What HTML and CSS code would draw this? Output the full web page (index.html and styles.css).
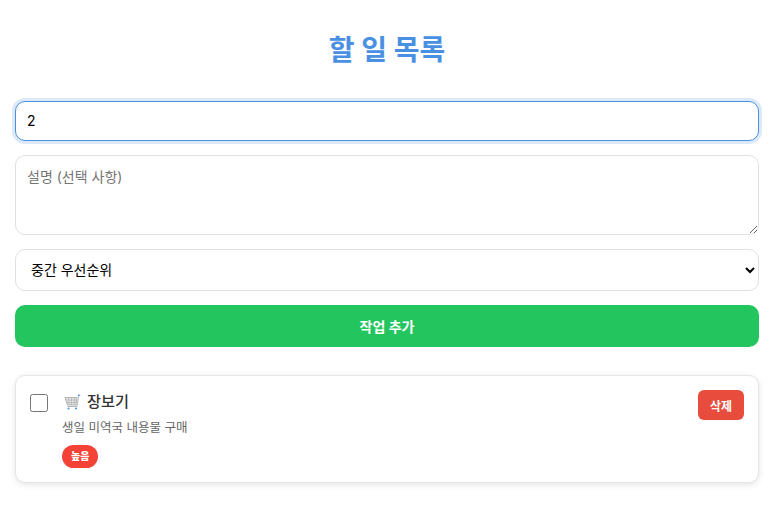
FILE: index.html
```
<!DOCTYPE html>
<html lang="ko">
<head>
<meta charset="utf-8">
<title>할 일 목록</title>
<link rel="stylesheet" href="styles.css">
</head>
<body>
<main class="app">
  <h1 class="title">할 일 목록</h1>
  <form class="form">
    <input class="field field-text" type="text" value="2" placeholder="제목" autofocus>
    <textarea class="field field-area" placeholder="설명 (선택 사항)"></textarea>
    <select class="field field-select"><option>중간 우선순위</option></select>
    <button class="add" type="button">작업 추가</button>
  </form>
  <ul class="list">
    <li class="card">
      <input class="check" type="checkbox">
      <div class="body">
        <h3 class="name">
          <svg class="cart" viewBox="0 0 17 16" width="17" height="16" aria-hidden="true">
            <path d="M1 3.5h12l-1 7.5H3.5z" fill="#e6e6e6" stroke="#b4b4b4" stroke-width="1"/>
            <path d="M4.5 3.5l.7 7.5M7.5 3.5v7.5M10.5 3.5l-.5 7.5M1.6 6h11M2.2 8.5h10" fill="none" stroke="#b0b0b0" stroke-width=".7"/>
            <path d="M3.5 12.5h9.5L14.5 2.5" fill="none" stroke="#b0b8c0" stroke-width="1"/>
            <path d="M14.2 2.4L15 1l1.2.5" fill="none" stroke="#5a96dc" stroke-width="1.2"/>
            <circle cx="4.5" cy="14.5" r="1.1" fill="#5a96dc"/>
            <circle cx="12" cy="14.5" r="1.1" fill="#5a96dc"/>
          </svg>
          <span>장보기</span>
        </h3>
        <p class="desc">생일 미역국 내용물 구매</p>
        <span class="badge">높음</span>
      </div>
      <button class="del" type="button">삭제</button>
    </li>
  </ul>
</main>
</body>
</html>
```
FILE: styles.css
```
* { box-sizing: border-box; }
html, body { margin: 0; background: #fff; }
body { font-family: Inter, "Noto Sans CJK KR", sans-serif; color: #333; }
.app { padding: 15px 21px 26px 15px; }
.title { margin: 17px 0 32px; font-size: 28px; line-height: 37px; font-weight: 700; text-align: center; color: #4a90e2; }
.form { display: flex; flex-direction: column; gap: 14px; }
.field { display: block; width: 100%; font-family: inherit; font-size: 14px; color: #000; background: #fff; border: 1px solid #e0e0e0; border-radius: 10px; }
.field::placeholder { color: #757575; }
.field-text { height: 40px; padding: 0 11px 2px; }
.field-text:focus { outline: none; border-color: #4a90e2; box-shadow: 0 0 0 3px rgba(74,144,226,.2); }
.field-area { height: 80px; padding: 10px 11px; resize: vertical; }
.field-select { height: 42px; padding: 0 11px 1px; }
.add { height: 42px; border: 0; border-radius: 10px; background: #22c55e; color: #fff; font-family: inherit; font-size: 14px; font-weight: 700; }
.list { list-style: none; margin: 28px 0 0; padding: 0; }
.card { display: flex; align-items: flex-start; height: 108px; padding: 14px; border: 1px solid #e5e5e5; border-radius: 10px; background: #fff; box-shadow: 0 2px 6px rgba(0,0,0,.1); }
.check { flex: none; width: 18px; height: 18px; margin: 4px 14px 0 0; }
.body { flex: 1; min-width: 0; }
.name { display: flex; align-items: center; gap: 6px; margin: 1px 0 0; padding-left: 2px; font-size: 15.2px; line-height: 22px; font-weight: 500; color: #333; }
.cart { flex: none; }
.desc { margin: 7px 0 0; font-size: 12.5px; line-height: 16px; color: #666; }
.badge { display: inline-block; margin-top: 9px; height: 23px; padding: 0 9px; border-radius: 12px; background: #f44336; color: #fff; font-size: 10px; line-height: 23px; font-weight: 800; }
.del { flex: none; width: 46px; height: 30px; border: 0; border-radius: 6px; background: #e74c3c; color: #fff; font-family: inherit; font-size: 12px; font-weight: 700; }
```
